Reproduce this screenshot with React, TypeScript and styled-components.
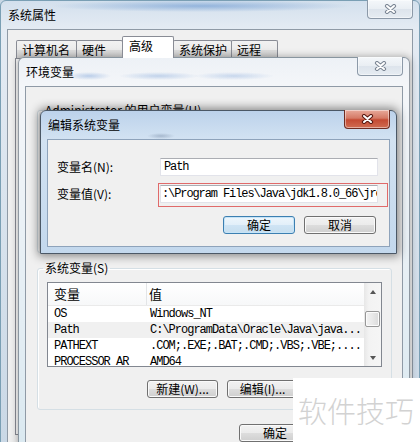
import { FC, ReactNode } from "react";
import styled, { createGlobalStyle, css } from "styled-components";

const UI_FONT = `"Noto Sans CJK SC", "Noto Sans", sans-serif`;
const MONO_FONT = `"Liberation Mono", "Noto Sans CJK SC", monospace`;

type FrameVariant = "outer" | "inactive" | "active";

/** Aero glass look of each window frame */
const FRAME_BG: Record<FrameVariant, string> = {
  outer: `radial-gradient(ellipse 150px 6px at 200px 5px, rgba(92,142,205,0.55), rgba(92,142,205,0)),
    linear-gradient(180deg, #d3e0ed 0%, #e4ebf3 28px, #c8d7e5 100%)`,
  inactive: `radial-gradient(ellipse 22px 4px at 70px 18px, rgba(120,160,215,0.45), rgba(120,160,215,0)),
    radial-gradient(ellipse 40px 4px at 140px 18px, rgba(120,160,215,0.4), rgba(120,160,215,0)),
    radial-gradient(ellipse 40px 4px at 215px 18px, rgba(120,160,215,0.35), rgba(120,160,215,0)),
    linear-gradient(180deg, #edf1f6 0%, #f4f6f9 28px, #d9e8f0 100%)`,
  active: `radial-gradient(ellipse 14px 3px at 120px 25px, rgba(90,110,140,0.35), rgba(90,110,140,0)),
    linear-gradient(180deg, #bcd2eb 0%, #d2e2f2 28px, #c3d8ed 100%)`,
};

const FRAME_BORDER: Record<FrameVariant, string> = {
  outer: "#7a9fb4",
  inactive: "rgba(70, 80, 92, 0.55)",
  active: "#4b5866",
};

const FRAME_SHADOW: Record<FrameVariant, string> = {
  outer: "none",
  inactive: "0 0 7px 1px rgba(0, 0, 0, 0.28)",
  active: "0 0 10px 2px rgba(0, 0, 0, 0.45)",
};

const TABS = [
  { label: "计算机名", width: 61 },
  { label: "硬件", width: 47 },
  { label: "高级", width: 52, selected: true },
  { label: "系统保护", width: 59 },
  { label: "远程", width: 47 },
];

const SYSTEM_VARS = [
  { name: "OS", value: "Windows_NT" },
  { name: "Path", value: "C:\\ProgramData\\Oracle\\Java\\java...", selected: true },
  { name: "PATHEXT", value: ".COM;.EXE;.BAT;.CMD;.VBS;.VBE;...." },
  { name: "PROCESSOR_AR", value: "AMD64" },
];

const GlobalStyle = createGlobalStyle`
  html, body {
    margin: 0;
    padding: 0;
  }
  body {
    width: 420px;
    height: 442px;
    overflow: hidden;
    background: #c8d7e5;
    font-family: ${UI_FONT};
    font-size: 12px;
    color: #000;
  }
  * {
    box-sizing: border-box;
  }
`;

const App = () => (
  <>
    <GlobalStyle />
    <Desktop>
      <Window variant="outer" title="系统属性" x={0} y={0} w={420} h={470}>
        <TabStrip>
          {TABS.map((tab) => (
            <Tab key={tab.label} $w={tab.width} $selected={tab.selected}>
              {tab.label}
            </Tab>
          ))}
        </TabStrip>
        <TabPanel />
      </Window>

      <Window variant="inactive" title="环境变量" x={18} y={57} w={392} h={410}>
        <EnvContent>
          <GroupBox $h={150} $gap={8}>
            <legend>Administrator 的用户变量(U)</legend>
          </GroupBox>
          <GroupBox $h={149}>
            <legend>系统变量(S)</legend>
            <VarList />
            <ButtonRow $top={13} $right={4}>
              <PushButton $w={71}>新建(W)...</PushButton>
              <PushButton $w={71}>编辑(I)...</PushButton>
              <PushButton $w={71}>删除(L)</PushButton>
            </ButtonRow>
          </GroupBox>
          <ButtonRow $top={14} $right={0}>
            <PushButton $w={72}>确定</PushButton>
            <PushButton $w={72}>取消</PushButton>
          </ButtonRow>
        </EnvContent>
      </Window>

      <Window variant="active" title="编辑系统变量" x={40} y={110} w={357} h={144}>
        <EditContent>
          <FieldRow>
            <FieldLabel>变量名(N):</FieldLabel>
            <InputWrap>
              <TextInput>Path</TextInput>
            </InputWrap>
          </FieldRow>
          <FieldRow>
            <FieldLabel>变量值(V):</FieldLabel>
            <InputWrap $marked>
              <TextInput $shift>:\Program Files\Java\jdk1.8.0_66\jre</TextInput>
            </InputWrap>
          </FieldRow>
          <ButtonRow $top={13} $right={2}>
            <PushButton $w={72} $default>
              确定
            </PushButton>
            <PushButton $w={72}>取消</PushButton>
          </ButtonRow>
        </EditContent>
      </Window>

      <Watermark>软件技巧</Watermark>
    </Desktop>
  </>
);

const Desktop = styled.div`
  position: relative;
  width: 420px;
  height: 442px;
  overflow: hidden;
  background: #c8d7e5;
`;

interface WindowProps {
  variant: FrameVariant;
  title: string;
  x: number;
  y: number;
  w: number;
  h: number;
  children?: ReactNode;
}

const Window: FC<WindowProps> = ({ variant, title, x, y, w, h, children }) => (
  <Frame $variant={variant} $x={x} $y={y} $w={w} $h={h}>
    <TitleBar>
      <TitleText>{title}</TitleText>
      <CloseButton $active={variant === "active"}>
        <XGlyph outline={variant === "active" ? "#5a1a12" : "#7d8896"} />
      </CloseButton>
    </TitleBar>
    <Client $variant={variant}>{children}</Client>
  </Frame>
);

const Frame = styled.div<{
  $variant: FrameVariant;
  $x: number;
  $y: number;
  $w: number;
  $h: number;
}>`
  ${({ $variant, $x, $y, $w, $h }) => css`
    position: absolute;
    left: ${$x}px;
    top: ${$y}px;
    width: ${$w}px;
    height: ${$h}px;
    background: ${FRAME_BG[$variant]};
    border: 1px solid ${FRAME_BORDER[$variant]};
    box-shadow: ${FRAME_SHADOW[$variant]};
  `}
  display: flex;
  flex-direction: column;
  padding: 0 6px 6px;
  border-radius: 6px 6px 0 0;
`;

const TitleBar = styled.div`
  display: flex;
  align-items: center;
  height: 28px;
  flex-shrink: 0;
`;

const TitleText = styled.span`
  padding-left: 1px;
  font-size: 12px;
  line-height: 16px;
  color: #000;
`;

const CloseButton = styled.div<{ $active?: boolean }>`
  align-self: flex-start;
  display: flex;
  align-items: center;
  justify-content: center;
  width: 46px;
  height: 19px;
  margin-top: -1px;
  margin-left: auto;
  border: 1px solid ${({ $active }) => ($active ? "#6e2c22" : "#8c99a8")};
  border-top: none;
  border-radius: 0 0 4px 4px;
  box-shadow: inset 0 0 0 1px rgba(255, 255, 255, 0.45);
  background: ${({ $active }) =>
    $active
      ? "linear-gradient(180deg, #e8aa9b 0%, #d57a66 45%, #c44a33 55%, #d06c52 100%)"
      : "linear-gradient(180deg, #f4f7fa 0%, #e9eef3 50%, #dde4ec 52%, #e6ecf2 100%)"};
`;

const XGlyph: FC<{ outline: string }> = ({ outline }) => (
  <svg width="13" height="10" viewBox="0 0 13 10">
    <path
      d="M3 2 L10 8 M10 2 L3 8"
      stroke={outline}
      strokeWidth="4.2"
      strokeLinecap="round"
      fill="none"
    />
    <path
      d="M3 2 L10 8 M10 2 L3 8"
      stroke="#fff"
      strokeWidth="2"
      strokeLinecap="round"
      fill="none"
    />
  </svg>
);

const Client = styled.div<{ $variant: FrameVariant }>`
  position: relative;
  flex: 1;
  display: flex;
  flex-direction: column;
  overflow: hidden;
  background: #f0f0f0;
  border: 1px solid
    ${({ $variant }) => ($variant === "active" ? "#8ea3bb" : "#8f9aa6")};
`;

/* ---------- 系统属性 ---------- */

const TabStrip = styled.div`
  display: flex;
  align-items: flex-end;
  height: 28px;
  padding: 0 0 0 8px;
`;

const Tab = styled.div<{ $w: number; $selected?: boolean }>`
  position: relative;
  width: ${({ $w }) => $w}px;
  height: ${({ $selected }) => ($selected ? 22 : 18)}px;
  margin-left: -1px;
  padding: ${({ $selected }) => ($selected ? "1px 0 0 6px" : "1px 0 0 5px")};
  border: 1px solid #898c95;
  border-bottom: none;
  border-radius: 2px 2px 0 0;
  font-size: 12px;
  line-height: 15px;
  white-space: nowrap;
  z-index: ${({ $selected }) => ($selected ? 1 : 0)};
  background: ${({ $selected }) =>
    $selected
      ? "#ffffff"
      : "linear-gradient(180deg, #f2f2f2 0%, #ebebeb 50%, #dddddd 51%, #cfcfcf 100%)"};

  &:first-child {
    margin-left: 0;
  }
`;

const TabPanel = styled.div`
  height: 377px;
  margin: 0 6px 0 7px;
  border: 1px solid #898c95;
  background: #fbfbfb;
`;

/* ---------- 环境变量 ---------- */

const EnvContent = styled.div`
  display: flex;
  flex-direction: column;
  padding: 16px 10px 0 11px;
`;

const GroupBox = styled.fieldset<{ $h: number; $gap?: number }>`
  height: ${({ $h }) => $h}px;
  margin: 0 0 ${({ $gap }) => $gap ?? 0}px;
  padding: 7px 9px 0;
  border: 1px solid #d5dfe5;
  border-radius: 3px;
  box-shadow: inset 1px 1px 0 #ffffff;

  legend {
    margin-left: -4px;
    padding: 0 2px;
    font-size: 12px;
    line-height: 14px;
    color: #000;
  }
`;

const VarList = () => (
  <ListView>
    <ListBody>
      <ListHeader>
        <HeaderCell $first>变量</HeaderCell>
        <HeaderCell>值</HeaderCell>
      </ListHeader>
      {SYSTEM_VARS.map((row) => (
        <ListRow key={row.name} $selected={row.selected}>
          <RowCell $first>{row.name}</RowCell>
          <RowCell>{row.value}</RowCell>
        </ListRow>
      ))}
    </ListBody>
    <ScrollBar>
      <ScrollArrow $up />
      <ScrollTrack>
        <ScrollThumb />
      </ScrollTrack>
      <ScrollArrow />
    </ScrollBar>
  </ListView>
);

const ListView = styled.div`
  display: flex;
  width: 335px;
  height: 85px;
  border: 1px solid #828790;
  background: #ffffff;
  overflow: hidden;
`;

const ListBody = styled.div`
  flex: 1;
  display: flex;
  flex-direction: column;
  overflow: hidden;
`;

const ListHeader = styled.div`
  display: grid;
  grid-template-columns: 99px 1fr;
  flex-shrink: 0;
  height: 23px;
  background: linear-gradient(180deg, #ffffff 0%, #f7f8f9 100%);
  border-bottom: 1px solid #eaeaea;
`;

const HeaderCell = styled.div<{ $first?: boolean }>`
  padding-left: ${({ $first }) => ($first ? 6 : 2)}px;
  border-right: ${({ $first }) => ($first ? "1px solid #e3e5e7" : "none")};
  font-size: 13px;
  line-height: 22px;
`;

const ListRow = styled.div<{ $selected?: boolean }>`
  display: grid;
  grid-template-columns: 99px 1fr;
  flex-shrink: 0;
  height: 16px;
  background: ${({ $selected }) => ($selected ? "#f0f0f0" : "transparent")};
`;

const RowCell = styled.div<{ $first?: boolean }>`
  padding-left: ${({ $first }) => ($first ? 6 : 3)}px;
  overflow: hidden;
  white-space: nowrap;
  font-family: ${MONO_FONT};
  font-size: 12px;
  letter-spacing: -1px;
  line-height: 16px;
`;

const ScrollBar = styled.div`
  display: flex;
  flex-direction: column;
  width: 17px;
  background: linear-gradient(90deg, #e7e7e7 0%, #f3f3f3 30%, #f5f5f5 100%);
`;

const ScrollArrow = styled.div<{ $up?: boolean }>`
  display: flex;
  align-items: center;
  justify-content: center;
  height: 17px;

  &::before {
    content: "";
    border-left: 3.5px solid transparent;
    border-right: 3.5px solid transparent;
    ${({ $up }) =>
      $up
        ? css`
            border-bottom: 4px solid #555;
          `
        : css`
            border-top: 4px solid #555;
          `}
  }
`;

const ScrollTrack = styled.div`
  flex: 1;
  padding: 11px 0 0 1px;
`;

const ScrollThumb = styled.div`
  width: 15px;
  height: 16px;
  border: 1px solid #979797;
  border-radius: 2px;
  background: linear-gradient(90deg, #f3f3f3 0%, #e8e8e8 50%, #dadada 100%);
  box-shadow: inset 0 0 0 1px #fbfbfb;
`;

const ButtonRow = styled.div<{ $top: number; $right: number }>`
  display: flex;
  justify-content: flex-end;
  gap: 9px;
  margin-top: ${({ $top }) => $top}px;
  padding-right: ${({ $right }) => $right}px;
`;

const PushButton = styled.div<{ $w: number; $default?: boolean }>`
  display: flex;
  align-items: center;
  justify-content: center;
  width: ${({ $w }) => $w}px;
  height: 18px;
  font-size: 12px;
  line-height: 16px;
  white-space: nowrap;
  border-radius: 3px;
  ${({ $default }) =>
    $default
      ? css`
          border: 1px solid #3c7fb1;
          background: linear-gradient(180deg, #eef6fc 0%, #e2eff9 50%, #cfe4f4 51%, #c6deef 100%);
          box-shadow: inset 0 0 0 1px #c6e4f7;
        `
      : css`
          border: 1px solid #707070;
          background: linear-gradient(180deg, #f2f2f2 0%, #ebebeb 50%, #dddddd 51%, #cfcfcf 100%);
          box-shadow: inset 0 0 0 1px #fafafa;
        `}
`;

/* ---------- 编辑系统变量 ---------- */

const EditContent = styled.div`
  display: flex;
  flex-direction: column;
  gap: 9px;
  padding: 18px 11px 0 9px;

  & > :last-child {
    margin-top: 4px;
  }
`;

const FieldRow = styled.div`
  display: flex;
  align-items: center;
  height: 18px;
`;

const FieldLabel = styled.div`
  width: 103px;
  font-size: 12px;
  line-height: 16px;
`;

const InputWrap = styled.div<{ $marked?: boolean }>`
  position: relative;
  width: 218px;
  height: 18px;

  ${({ $marked }) =>
    $marked &&
    css`
      &::after {
        content: "";
        position: absolute;
        top: -2px;
        left: -2px;
        right: -10px;
        bottom: -4px;
        border: 1px solid #e06a6a;
      }
    `}
`;

const TextInput = styled.div<{ $shift?: boolean }>`
  width: 100%;
  height: 100%;
  padding-left: ${({ $shift }) => ($shift ? 1 : 3)}px;
  overflow: hidden;
  white-space: nowrap;
  background: #ffffff;
  border: 1px solid #e2e3ea;
  border-top-color: #abadb3;
  font-family: ${MONO_FONT};
  font-size: 12px;
  letter-spacing: -1.1px;
  line-height: 16px;
`;

/* ---------- 水印 ---------- */

const Watermark = styled.div`
  position: absolute;
  left: 293px;
  top: 378px;
  width: 127px;
  height: 64px;
  display: flex;
  align-items: center;
  padding-left: 5px;
  background: #ffffff;
  font-size: 29px;
  font-weight: 300;
  line-height: 34px;
  color: #d2d2d2;
  white-space: nowrap;
`;

export default App;
